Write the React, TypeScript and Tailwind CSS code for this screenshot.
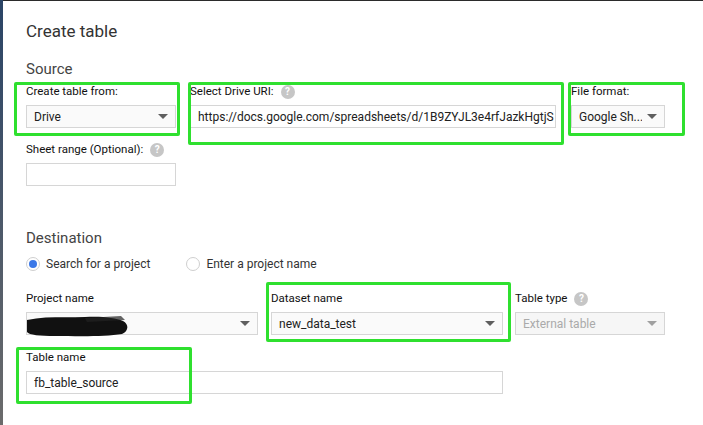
import React from 'react';

const font = { fontFamily: 'Roboto, "Liberation Sans", sans-serif' };

const Help: React.FC = () => (
  <span className="ml-[7px] inline-flex h-[14px] w-[14px] items-center justify-center rounded-full bg-[#c6c6c6] text-[10px] font-bold leading-none text-white">
    ?
  </span>
);

const Caret: React.FC<{ light?: boolean }> = ({ light }) => (
  <span
    className={`h-0 w-0 shrink-0 border-x-[5px] border-t-[5px] border-x-transparent ${
      light ? 'border-t-[#a0a0a0]' : 'border-t-[#5f5f5f]'
    }`}
  />
);

const Label: React.FC<{ text: string; help?: boolean }> = ({ text, help }) => (
  <div className="flex h-[16px] items-center text-[11.5px] text-[#111]">
    {text}
    {help && <Help />}
  </div>
);

const Select: React.FC<{ value?: string; width: string; disabled?: boolean; children?: React.ReactNode }> = ({
  value,
  width,
  disabled,
  children,
}) => (
  <div
    className={`relative flex h-[23px] items-center justify-between gap-[5px] border border-[#d6d6d6] pl-[7px] pr-[7px] text-[12px] ${width} ${
      disabled ? 'bg-[#f6f6f6] text-[#aaa]' : 'bg-[#fafafa] text-[#212121]'
    }`}
  >
    <span className="overflow-hidden whitespace-nowrap">{value}</span>
    <Caret light={disabled} />
    {children}
  </div>
);

const Input: React.FC<{ value?: string; width: string }> = ({ value, width }) => (
  <div className={`flex h-[23px] items-center overflow-hidden whitespace-nowrap border border-[#d6d6d6] bg-white px-[7px] text-[12px] text-[#212121] ${width}`}>
    {value}
  </div>
);

const Radio: React.FC<{ checked?: boolean; label: string }> = ({ checked, label }) => (
  <div className="flex items-center gap-[6px] text-[12px] text-[#333]">
    <span className="flex h-[14px] w-[14px] items-center justify-center rounded-full border border-[#cfcfcf] bg-white">
      {checked && <span className="h-[8px] w-[8px] rounded-full bg-[#3b78e7]" />}
    </span>
    {label}
  </div>
);

const GreenBox: React.FC<{ cls: string }> = ({ cls }) => (
  <div className={`pointer-events-none absolute rounded-[2px] border-[3px] border-[#2fe02f] ${cls}`} />
);

export default function App() {
  return (
    <div className="relative flex h-[425px] w-[703px] overflow-hidden bg-white" style={font}>
      <div className="h-full w-[3px] bg-gradient-to-b from-[#2a4466] to-[#6b6b6b]" />
      <div className="flex-1 border-t border-[#2b2b2b] pl-[23px] pt-[19px]">
        <div className="text-[17px] leading-[22px] text-[#333]">Create table</div>

        <div className="mt-[17px] text-[15px] leading-[20px] text-[#444]">Source</div>

        <div className="mt-[5px] flex gap-[14px]">
          <div className="flex flex-col gap-[5px]">
            <Label text="Create table from:" />
            <Select value="Drive" width="w-[150px]" />
          </div>
          <div className="flex flex-col gap-[5px]">
            <Label text="Select Drive URI:" help />
            <Input value="https://docs.google.com/spreadsheets/d/1B9ZYJL3e4rfJazkHgtjS" width="w-[366px]" />
          </div>
          <div className="ml-px flex flex-col gap-[5px]">
            <Label text="File format:" />
            <Select value="Google Sh..." width="w-[94px]" />
          </div>
        </div>

        <div className="mt-[14px] flex flex-col gap-[5px]">
          <Label text="Sheet range (Optional):" help />
          <Input width="w-[150px]" />
        </div>

        <div className="mt-[42px] text-[15px] leading-[20px] text-[#444]">Destination</div>

        <div className="mt-[7px] flex gap-[36px]">
          <Radio checked label="Search for a project" />
          <Radio label="Enter a project name" />
        </div>

        <div className="mt-[18px] flex gap-[13px]">
          <div className="flex flex-col gap-[5px]">
            <Label text="Project name" />
            <Select width="w-[232px]">
              <svg className="absolute left-[-2px] top-[1px]" width="106" height="24" viewBox="0 0 106 24">
                <path
                  d="M2 6 C20 2 40 4 60 3 C78 2 90 4 98 7 C104 10 104 17 97 20 C80 23 50 22 30 22 C15 22 4 21 2 18 Z"
                  fill="#111"
                />
                <path d="M60 4 L96 2 L100 6 L62 8 Z" fill="#222" opacity="0.7" />
              </svg>
            </Select>
          </div>
          <div className="flex flex-col gap-[5px]">
            <Label text="Dataset name" />
            <Select value="new_data_test" width="w-[232px]" />
          </div>
          <div className="ml-[-1px] flex flex-col gap-[5px]">
            <Label text="Table type" help />
            <Select value="External table" width="w-[150px]" disabled />
          </div>
        </div>

        <div className="mt-[15px] flex flex-col gap-[5px]">
          <Label text="Table name" />
          <Input value="fb_table_source" width="w-[477px]" />
        </div>
      </div>

      <GreenBox cls="left-[14px] top-[82px] h-[54px] w-[166px]" />
      <GreenBox cls="left-[188px] top-[82px] h-[63px] w-[376px]" />
      <GreenBox cls="left-[568px] top-[82px] h-[54px] w-[117px]" />
      <GreenBox cls="left-[266px] top-[282px] h-[60px] w-[245px]" />
      <GreenBox cls="left-[16px] top-[347px] h-[57px] w-[176px]" />
    </div>
  );
}
